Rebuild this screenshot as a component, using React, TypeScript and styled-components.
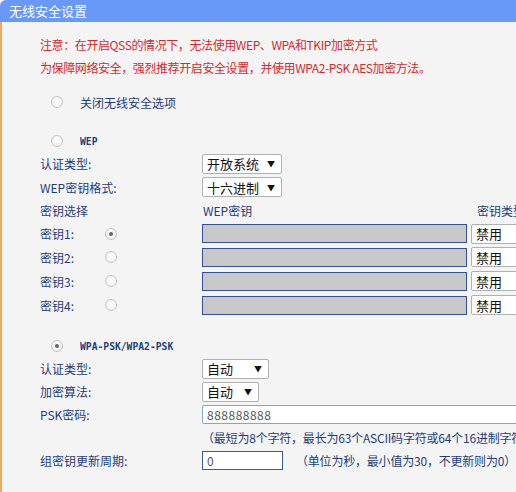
import styled, { createGlobalStyle } from "styled-components";

const GlobalStyle = createGlobalStyle`
  html, body {
    margin: 0;
    padding: 0;
    background: #f4f4f4;
    overflow: hidden;
  }
  body {
    font-family: "Noto Sans CJK SC", "Liberation Sans", sans-serif;
    font-size: 12px;
  }
`;

const Panel = styled.div`
  width: 700px;
  min-height: 492px;
  background: #f4f4f4;
`;

const TitleBar = styled.div`
  height: 22px;
  line-height: 22px;
  padding-left: 9px;
  background: #6898f8;
  color: #ffffff;
  font-size: 13px;
  border-top-left-radius: 6px;
`;

const Body = styled.div`
  border-left: 2px solid #f0a860;
  padding: 11px 0 20px 38px;
  min-height: 460px;
  box-sizing: border-box;
`;

const Note = styled.div`
  height: 23px;
  line-height: 23px;
  color: #d42a2a;
  font-size: 12px;
  letter-spacing: -0.4px;
`;

const Row = styled.div<{ $h: number; $mt?: number }>`
  display: grid;
  grid-template-columns: 162px 1fr;
  align-items: center;
  height: ${(p) => p.$h}px;
  margin-top: ${(p) => p.$mt ?? 0}px;
  color: #1f3d78;
`;

const Label = styled.div`
  display: flex;
  align-items: center;
  white-space: nowrap;
`;

const KeyName = styled.span`
  width: 65px;
`;

const Cell = styled.div`
  display: flex;
  align-items: center;
  gap: 4px;
  white-space: nowrap;
`;

const Option = styled.div<{ $h: number; $mt: number }>`
  display: flex;
  align-items: center;
  gap: 17px;
  height: ${(p) => p.$h}px;
  margin-top: ${(p) => p.$mt}px;
  padding-left: 11px;
  color: #1f3d78;
`;

const Mode = styled.span`
  font-family: "DejaVu Sans Mono", monospace;
  font-weight: bold;
  font-size: 11px;
  transform: scaleX(0.88);
  transform-origin: left center;
  color: #22407a;
`;

const Radio = styled.span<{ $on?: boolean }>`
  width: 12px;
  height: 12px;
  box-sizing: border-box;
  border-radius: 50%;
  border: 1px solid #c4c4c4;
  background: radial-gradient(circle at 50% 40%, #ffffff 0%, #ececec 100%);
  display: inline-flex;
  align-items: center;
  justify-content: center;

  &::after {
    content: "";
    width: 4px;
    height: 4px;
    border-radius: 50%;
    background: ${(p) => (p.$on ? "#666666" : "transparent")};
  }
`;

const Select = styled.div<{ $w: number }>`
  width: ${(p) => p.$w}px;
  height: 20px;
  box-sizing: border-box;
  border: 1px solid #b0b0b0;
  border-radius: 2px;
  background: #ffffff;
  color: #111111;
  font-size: 13px;
  display: flex;
  align-items: center;
  justify-content: space-between;
  padding: 0 6px 0 4px;

  &::after {
    content: "▼";
    font-size: 8px;
    color: #111111;
  }
`;

const KeyInput = styled.div`
  width: 265px;
  height: 19px;
  box-sizing: border-box;
  border: 1px solid #35509a;
  background: #c8c8c8;
`;

const TextInput = styled.div<{ $w: number; $soft?: boolean }>`
  width: ${(p) => p.$w}px;
  height: 19px;
  box-sizing: border-box;
  border: 1px solid ${(p) => (p.$soft ? "#88a4cc" : "#3c5a9c")};
  border-radius: ${(p) => (p.$soft ? "2px" : "0")};
  background: #ffffff;
  color: #555555;
  font-size: 12px;
  letter-spacing: 0.5px;
  padding-left: 4px;
  display: flex;
  align-items: center;
`;

const Hint = styled.span<{ $ml?: number }>`
  margin-left: ${(p) => p.$ml ?? 0}px;
  color: #1f3d78;
  letter-spacing: -0.2px;
`;

const Header = styled.span<{ $w?: number }>`
  width: ${(p) => (p.$w ? `${p.$w}px` : "auto")};
  padding-left: 1px;
  color: #22407a;
`;

const keys = [
  { name: "密钥1:", on: true, h: 23 },
  { name: "密钥2:", on: false, h: 24 },
  { name: "密钥3:", on: false, h: 24 },
  { name: "密钥4:", on: false, h: 24 },
];

export default function App() {
  return (
    <Panel>
      <GlobalStyle />
      <TitleBar>无线安全设置</TitleBar>
      <Body>
        <Note>注意：在开启QSS的情况下，无法使用WEP、WPA和TKIP加密方式</Note>
        <Note>为保障网络安全，强烈推荐开启安全设置，并使用WPA2-PSK AES加密方法。</Note>

        <Option $h={22} $mt={12}>
          <Radio />
          <span>关闭无线安全选项</span>
        </Option>

        <Option $h={22} $mt={17}>
          <Radio />
          <Mode>WEP</Mode>
        </Option>
        <Row $h={23}>
          <Label>认证类型:</Label>
          <Cell>
            <Select $w={80}>开放系统</Select>
          </Cell>
        </Row>
        <Row $h={24}>
          <Label>WEP密钥格式:</Label>
          <Cell>
            <Select $w={80}>十六进制</Select>
          </Cell>
        </Row>
        <Row $h={23}>
          <Label>密钥选择</Label>
          <Cell>
            <Header $w={269}>WEP密钥</Header>
            <Header>密钥类型</Header>
          </Cell>
        </Row>
        {keys.map((k) => (
          <Row $h={k.h} key={k.name}>
            <Label>
              <KeyName>{k.name}</KeyName>
              <Radio $on={k.on} />
            </Label>
            <Cell>
              <KeyInput />
              <Select $w={70}>禁用</Select>
            </Cell>
          </Row>
        ))}

        <Option $h={22} $mt={18}>
          <Radio $on />
          <Mode>WPA-PSK/WPA2-PSK</Mode>
        </Option>
        <Row $h={23}>
          <Label>认证类型:</Label>
          <Cell>
            <Select $w={67}>自动</Select>
          </Cell>
        </Row>
        <Row $h={23}>
          <Label>加密算法:</Label>
          <Cell>
            <Select $w={57}>自动</Select>
          </Cell>
        </Row>
        <Row $h={23}>
          <Label>PSK密码:</Label>
          <Cell>
            <TextInput $w={340} $soft>888888888</TextInput>
          </Cell>
        </Row>
        <Row $h={23}>
          <Label />
          <Cell>
            <Hint>（最短为8个字符，最长为63个ASCII码字符或64个16进制字符）</Hint>
          </Cell>
        </Row>
        <Row $h={23}>
          <Label>组密钥更新周期:</Label>
          <Cell>
            <TextInput $w={81}>0</TextInput>
            <Hint $ml={9}>（单位为秒，最小值为30，不更新则为0）</Hint>
          </Cell>
        </Row>
      </Body>
    </Panel>
  );
}
